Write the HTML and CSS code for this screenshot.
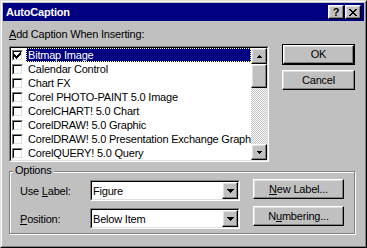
FILE: index.html
```html
<!DOCTYPE html>
<html>
<head>
<meta charset="utf-8">
<link rel="stylesheet" href="styles.css">
</head>
<body>
<div class="window">
  <div class="window-inner">
    <div class="titlebar">
      <span class="title">AutoCaption</span>
      <div class="tb-buttons">
        <div class="tb-btn raised"><span class="help-glyph">?</span></div>
        <div class="tb-btn raised">
          <svg class="x-glyph" width="8" height="7" viewBox="0 0 8 7" shape-rendering="crispEdges">
            <rect x="0" y="0" width="2" height="1"/><rect x="6" y="0" width="2" height="1"/>
            <rect x="1" y="1" width="2" height="1"/><rect x="5" y="1" width="2" height="1"/>
            <rect x="2" y="2" width="4" height="1"/>
            <rect x="3" y="3" width="2" height="1"/>
            <rect x="2" y="4" width="4" height="1"/>
            <rect x="1" y="5" width="2" height="1"/><rect x="5" y="5" width="2" height="1"/>
            <rect x="0" y="6" width="2" height="1"/><rect x="6" y="6" width="2" height="1"/>
          </svg>
        </div>
      </div>
    </div>

    <div class="content">
      <div class="top">
        <div class="left">
          <div class="label"><u>A</u>dd Caption When Inserting:</div>
          <div class="listbox sunken">
            <div class="sunken-inner listbox-inner">
              <div class="items">
                <div class="item">
                  <span class="check sunken"><span class="sunken-inner check-inner">
                    <svg width="7" height="7" viewBox="0 0 7 7" shape-rendering="crispEdges">
                      <rect x="6" y="0" width="1" height="1"/>
                      <rect x="5" y="1" width="2" height="1"/>
                      <rect x="0" y="2" width="1" height="1"/><rect x="4" y="2" width="3" height="1"/>
                      <rect x="0" y="3" width="2" height="1"/><rect x="3" y="3" width="3" height="1"/>
                      <rect x="0" y="4" width="5" height="1"/>
                      <rect x="1" y="5" width="3" height="1"/>
                      <rect x="2" y="6" width="1" height="1"/>
                    </svg>
                  </span></span>
                  <span class="item-text selected">Bitmap Image</span>
                </div>
                <div class="item"><span class="check sunken"><span class="sunken-inner check-inner"></span></span><span class="item-text">Calendar Control</span></div>
                <div class="item"><span class="check sunken"><span class="sunken-inner check-inner"></span></span><span class="item-text">Chart FX</span></div>
                <div class="item"><span class="check sunken"><span class="sunken-inner check-inner"></span></span><span class="item-text">Corel PHOTO-PAINT 5.0 Image</span></div>
                <div class="item"><span class="check sunken"><span class="sunken-inner check-inner"></span></span><span class="item-text">CorelCHART! 5.0 Chart</span></div>
                <div class="item"><span class="check sunken"><span class="sunken-inner check-inner"></span></span><span class="item-text">CorelDRAW! 5.0 Graphic</span></div>
                <div class="item"><span class="check sunken"><span class="sunken-inner check-inner"></span></span><span class="item-text">CorelDRAW! 5.0 Presentation Exchange Graph</span></div>
                <div class="item"><span class="check sunken"><span class="sunken-inner check-inner"></span></span><span class="item-text">CorelQUERY! 5.0 Query</span></div>
              </div>
              <div class="scrollbar">
                <div class="sb-btn raised">
                  <svg width="5" height="3" viewBox="0 0 5 3" shape-rendering="crispEdges"><rect x="2" y="0" width="1" height="1"/><rect x="1" y="1" width="3" height="1"/><rect x="0" y="2" width="5" height="1"/></svg>
                </div>
                <div class="sb-thumb raised"></div>
                <div class="sb-track"></div>
                <div class="sb-btn raised">
                  <svg width="5" height="3" viewBox="0 0 5 3" shape-rendering="crispEdges"><rect x="0" y="0" width="5" height="1"/><rect x="1" y="1" width="3" height="1"/><rect x="2" y="2" width="1" height="1"/></svg>
                </div>
              </div>
            </div>
          </div>
        </div>
        <div class="actions">
          <div class="default-frame"><div class="btn raised ok">OK</div></div>
          <div class="btn raised cancel">Cancel</div>
        </div>
      </div>

      <div class="group">
        <span class="legend">Options</span>
        <div class="group-body">
          <div class="fields">
            <div class="field-row">
              <span class="field-label">Use <u>L</u>abel:</span>
              <div class="combo sunken">
                <div class="sunken-inner combo-inner">
                  <span class="combo-text">Figure</span>
                  <div class="combo-btn raised">
                    <svg width="7" height="4" viewBox="0 0 7 4" shape-rendering="crispEdges"><rect x="0" y="0" width="7" height="1"/><rect x="1" y="1" width="5" height="1"/><rect x="2" y="2" width="3" height="1"/><rect x="3" y="3" width="1" height="1"/></svg>
                  </div>
                </div>
              </div>
            </div>
            <div class="field-row">
              <span class="field-label"><u>P</u>osition:</span>
              <div class="combo sunken">
                <div class="sunken-inner combo-inner">
                  <span class="combo-text">Below Item</span>
                  <div class="combo-btn raised">
                    <svg width="7" height="4" viewBox="0 0 7 4" shape-rendering="crispEdges"><rect x="0" y="0" width="7" height="1"/><rect x="1" y="1" width="5" height="1"/><rect x="2" y="2" width="3" height="1"/><rect x="3" y="3" width="1" height="1"/></svg>
                  </div>
                </div>
              </div>
            </div>
          </div>
          <div class="side-buttons">
            <div class="btn raised side-btn"><span><u>N</u>ew Label...</span></div>
            <div class="btn raised side-btn"><span>N<u>u</u>mbering...</span></div>
          </div>
        </div>
      </div>
    </div>
  </div>
</div>
</body>
</html>
```

FILE: styles.css
```css
* { box-sizing: border-box; }
html, body { margin: 0; padding: 0; }
body {
  width: 367px;
  height: 248px;
  overflow: hidden;
  background: #c0c0c0;
  font-family: "Liberation Sans", Arial, sans-serif;
  font-size: 11px;
  line-height: 13px;
  letter-spacing: -0.2px;
  color: #000;
}
u { text-decoration-thickness: 1px; text-underline-offset: 1px; }

.window {
  width: 367px;
  height: 248px;
  background: #c0c0c0;
  border: 1px solid;
  border-color: #dfdfdf #000 #000 #dfdfdf;
}
.window-inner {
  height: 100%;
  border: 1px solid;
  border-color: #fff #808080 #808080 #fff;
  padding: 1px;
  display: flex;
  flex-direction: column;
}

.raised {
  background: #c0c0c0;
  border: 1px solid;
  border-color: #fff #000 #000 #fff;
  box-shadow: inset -1px -1px 0 #808080, inset 1px 1px 0 #dfdfdf;
}
.sunken {
  border: 1px solid;
  border-color: #808080 #fff #fff #808080;
}
.sunken-inner {
  border: 1px solid;
  border-color: #000 #dfdfdf #dfdfdf #000;
}

/* Title bar */
.titlebar {
  height: 18px;
  background: #000080;
  display: flex;
  align-items: center;
  padding: 0 3px 0 3px;
}
.title {
  color: #fff;
  font-weight: bold;
  font-size: 11px;
}
.tb-buttons {
  margin-left: auto;
  display: flex;
  gap: 1px;
}
.tb-btn {
  width: 16px;
  height: 14px;
  display: flex;
  align-items: center;
  justify-content: center;
}
.help-glyph {
  font-weight: bold;
  font-size: 11px;
  line-height: 11px;
  letter-spacing: 0;
}
.x-glyph { display: block; }

/* Content */
.content {
  display: flex;
  flex-direction: column;
  padding: 7px 0 0 6px;
}
.top { display: flex; }
.left { width: 260px; }
.label { height: 13px; margin-bottom: 5px; }

.listbox { width: 260px; height: 116px; }
.listbox-inner {
  height: 100%;
  display: flex;
  background: #fff;
}
.items { flex: 1; min-width: 0; overflow: hidden; }
.item {
  height: 14px;
  display: flex;
  align-items: center;
  white-space: nowrap;
}
.check {
  width: 11px;
  height: 11px;
  margin-left: 1px;
  flex: none;
  display: block;
}
.check-inner {
  display: flex;
  width: 9px;
  height: 9px;
  background: #fff;
}
.check-inner svg { display: block; }
.item-text {
  margin-left: 3px;
  padding: 0 2px;
  height: 14px;
  line-height: 14px;
}
.item-text.selected {
  flex: 1;
  background: #000080;
  color: #fff;
  outline: 1px dotted #ffff80;
  outline-offset: -1px;
}

.scrollbar {
  width: 16px;
  flex: none;
  display: flex;
  flex-direction: column;
}
.sb-btn {
  width: 16px;
  height: 16px;
  display: flex;
  align-items: center;
  justify-content: center;
}
.sb-btn svg { display: block; }
.sb-thumb { width: 16px; height: 24px; }
.sb-track {
  flex: 1;
  background-color: #fff;
  background-image: repeating-conic-gradient(#c0c0c0 0 25%, #fff 0 50%);
  background-size: 2px 2px;
}

/* Buttons */
.actions {
  margin-left: 13px;
  width: 73px;
  padding-top: 16px;
  display: flex;
  flex-direction: column;
}
.btn {
  display: flex;
  align-items: center;
  justify-content: center;
  white-space: nowrap;
}
.default-frame {
  border: 1px solid #000;
  height: 21px;
}
.ok { height: 19px; }
.cancel { height: 20px; margin-top: 5px; }

/* Group */
.group {
  position: relative;
  margin-top: 9px;
  width: 346px;
  height: 63px;
  border: 1px solid #808080;
  box-shadow: 1px 1px 0 #fff, inset 1px 1px 0 #fff;
}
.legend {
  position: absolute;
  left: 3px;
  top: -8px;
  padding: 0 2px;
  background: #c0c0c0;
  line-height: 13px;
}
.group-body {
  display: flex;
  padding: 8px 0 0 10px;
}
.fields {
  display: flex;
  flex-direction: column;
  gap: 7px;
}
.field-row {
  display: flex;
  align-items: center;
  height: 21px;
}
.field-label { width: 70px; padding-top: 2px; }
.combo { width: 150px; height: 21px; }
.combo-inner {
  height: 100%;
  background: #fff;
  display: flex;
  align-items: center;
}
.combo-text { flex: 1; padding-left: 1px; padding-top: 1px; }
.combo-btn {
  width: 16px;
  height: 17px;
  display: flex;
  align-items: center;
  justify-content: center;
}
.combo-btn svg { display: block; }

.side-buttons {
  margin-left: 13px;
  margin-top: -1px;
  display: flex;
  flex-direction: column;
  gap: 7px;
}
.side-btn { width: 91px; height: 20px; }
```
